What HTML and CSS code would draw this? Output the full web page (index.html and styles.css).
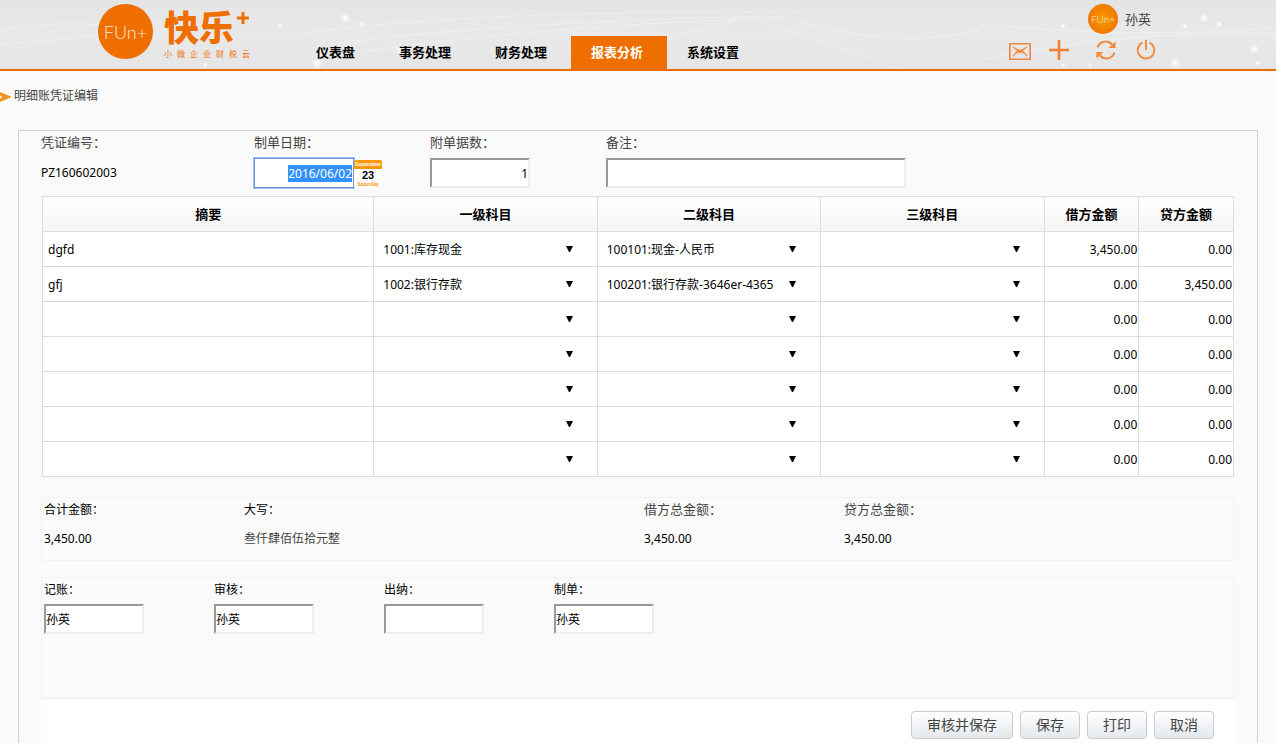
FILE: index.html
```html
<!DOCTYPE html>
<html lang="zh-CN">
<head>
<meta charset="utf-8">
<title>明细账凭证编辑</title>
<link rel="stylesheet" href="styles.css">
</head>
<body>
<header class="top">
  <svg class="sky" aria-hidden="true" width="100%" height="69" viewBox="0 0 1276 69" preserveAspectRatio="xMidYMid slice">
    <defs><radialGradient id="star"><stop offset="0" stop-color="#fff"/><stop offset="1" stop-color="#fff" stop-opacity="0"/></radialGradient></defs>
    <g fill="none" stroke="#fff" stroke-opacity=".3">
      <path d="M0 30Q60 20 110 26M0 44Q90 40 160 22M300 34Q460 10 800 12M330 44Q520 20 790 16M360 52Q560 24 780 18M670 69L740 14L900 69M560 69L735 20M980 60Q1120 30 1276 34M980 24Q1130 40 1276 28M800 22Q900 50 980 30"/>
    </g>
    <g fill="url(#star)">
      <circle cx="345" cy="18" r="5"/><circle cx="361" cy="24" r="3"/><circle cx="280" cy="26" r="3"/><circle cx="317" cy="63" r="6"/><circle cx="399" cy="50" r="4"/><circle cx="205" cy="65" r="3"/><circle cx="1204" cy="18" r="5"/><circle cx="1219" cy="24" r="3"/><circle cx="1175" cy="63" r="6"/><circle cx="1254" cy="49" r="5"/><circle cx="1185" cy="26" r="3"/><circle cx="1063" cy="26" r="3"/><circle cx="1258" cy="63" r="3"/><circle cx="1063" cy="65" r="3"/><circle cx="1090" cy="65" r="3"/>
    </g>
  </svg>
  <a class="brand" href="#" aria-label="快乐+">
    <span class="disc">FUn+</span>
    <span class="words">
      <span class="name">快乐<svg class="cross" viewBox="0 0 12 12" aria-hidden="true"><path d="M6 0V12M0 6H12" stroke="#ee6f00" stroke-width="3"/></svg></span>
      <span class="motto"><span>小</span><span>微</span><span>企</span><span>业</span><span>财</span><span>税</span><span>云</span></span>
    </span>
  </a>
  <nav class="menu">
    <a href="#">仪表盘</a><a href="#">事务处理</a><a href="#">财务处理</a><a class="on" href="#">报表分析</a><a href="#">系统设置</a>
  </nav>
  <div class="account">
    <div class="user"><span class="disc small">FUn+</span><span>孙英</span></div>
    <div class="tools">
      <button type="button" aria-label="消息"><svg width="22" height="17" viewBox="0 0 22 17"><path d="M.8.8H21.2V16.2H.8Z" fill="none" stroke="#f08a3c" stroke-width="1.6"/><path d="M4 4L11 8.500L18 4M4 13L8.500 8M18 13L13.500 8" fill="none" stroke="#f08a3c" stroke-width="1.2"/><path d="M6 5L11 7L16 5L13 9L15 11L11 9.500L7 11L9 9Z" fill="#f08a3c"/></svg></button>
      <button type="button" aria-label="新增"><svg width="20" height="20" viewBox="0 0 20 20"><path d="M10 0V20M0 10H20" stroke="#f08030" stroke-width="2.600"/></svg></button>
      <button type="button" aria-label="刷新" class="refresh"><svg width="20" height="20" viewBox="0 0 20 20"><path d="M1.500 7.500A8.500 8.500 0 0 1 16 4.500M18.500 12.500A8.500 8.500 0 0 1 4 15.500" fill="none" stroke="#f08a3c" stroke-width="2"/><path d="M19.500 1.500V8H12.500ZM.5 18.500V12H7.500Z" fill="#f08a3c"/></svg></button>
      <button type="button" aria-label="退出"><svg width="20" height="20" viewBox="0 0 20 20"><path d="M6.500 2.700A8.300 8.300 0 1 0 13.500 2.700M10 0V10" fill="none" stroke="#f08a3c" stroke-width="1.900"/></svg></button>
    </div>
  </div>
</header>

<h1 class="crumb"><svg width="12" height="12" viewBox="0 0 12 12" aria-hidden="true"><path d="M0 2L12 7L0 12V9L2 7L0 5Z" fill="#f2941c"/></svg>明细账凭证编辑</h1>

<main class="panel">
  <form class="voucher">
    <div class="head">
      <div class="field"><span class="cap">凭证编号：</span><span class="value">PZ160602003</span></div>
      <div class="field"><label class="cap" for="date">制单日期：</label>
        <div class="dated"><input class="box num focused" id="date" value="2016/06/02"><button class="cal" type="button" aria-label="选择日期"><span class="month">September</span><span class="day">23</span><span class="week">Saturday</span></button></div></div>
      <div class="field"><label class="cap" for="docs">附单据数：</label><input class="box num" id="docs" value="1"></div>
      <div class="field"><label class="cap" for="memo">备注：</label><input class="box wide" id="memo"></div>
    </div>

    <table class="entries">
      <colgroup><col class="c-sum"><col class="c-sub"><col class="c-sub"><col class="c-sub"><col class="c-amt"><col class="c-amt"></colgroup>
      <thead><tr><th>摘要</th><th>一级科目</th><th>二级科目</th><th>三级科目</th><th>借方金额</th><th>贷方金额</th></tr></thead>
      <tbody>
        <tr><td>dgfd</td><td class="pick"><select aria-label="一级科目"><option>1001:库存现金</option></select></td><td class="pick"><select aria-label="二级科目"><option>100101:现金-人民币</option></select></td><td class="pick"><select aria-label="三级科目"><option></option></select></td><td class="amt">3,450.00</td><td class="amt">0.00</td></tr>
        <tr><td>gfj</td><td class="pick"><select aria-label="一级科目"><option>1002:银行存款</option></select></td><td class="pick"><select aria-label="二级科目"><option>100201:银行存款-3646er-4365</option></select></td><td class="pick"><select aria-label="三级科目"><option></option></select></td><td class="amt">0.00</td><td class="amt">3,450.00</td></tr>
        <tr><td></td><td class="pick"><select aria-label="一级科目"><option></option></select></td><td class="pick"><select aria-label="二级科目"><option></option></select></td><td class="pick"><select aria-label="三级科目"><option></option></select></td><td class="amt">0.00</td><td class="amt">0.00</td></tr>
        <tr><td></td><td class="pick"><select aria-label="一级科目"><option></option></select></td><td class="pick"><select aria-label="二级科目"><option></option></select></td><td class="pick"><select aria-label="三级科目"><option></option></select></td><td class="amt">0.00</td><td class="amt">0.00</td></tr>
        <tr><td></td><td class="pick"><select aria-label="一级科目"><option></option></select></td><td class="pick"><select aria-label="二级科目"><option></option></select></td><td class="pick"><select aria-label="三级科目"><option></option></select></td><td class="amt">0.00</td><td class="amt">0.00</td></tr>
        <tr><td></td><td class="pick"><select aria-label="一级科目"><option></option></select></td><td class="pick"><select aria-label="二级科目"><option></option></select></td><td class="pick"><select aria-label="三级科目"><option></option></select></td><td class="amt">0.00</td><td class="amt">0.00</td></tr>
        <tr><td></td><td class="pick"><select aria-label="一级科目"><option></option></select></td><td class="pick"><select aria-label="二级科目"><option></option></select></td><td class="pick"><select aria-label="三级科目"><option></option></select></td><td class="amt">0.00</td><td class="amt">0.00</td></tr>
      </tbody>
    </table>

    <section class="group totals">
      <div class="field"><span class="cap dark">合计金额：</span><span class="value">3,450.00</span></div>
      <div class="field"><span class="cap dark">大写：</span><span class="value soft">叁仟肆佰伍拾元整</span></div>
      <div class="field"><span class="cap">借方总金额：</span><span class="value">3,450.00</span></div>
      <div class="field"><span class="cap">贷方总金额：</span><span class="value">3,450.00</span></div>
    </section>

    <section class="group signers">
      <div class="field"><label class="cap dark" for="book">记账：</label><input class="box" id="book" value="孙英"></div>
      <div class="field"><label class="cap dark" for="audit">审核：</label><input class="box" id="audit" value="孙英"></div>
      <div class="field"><label class="cap dark" for="cash">出纳：</label><input class="box" id="cash"></div>
      <div class="field"><label class="cap dark" for="maker">制单：</label><input class="box" id="maker" value="孙英"></div>
    </section>

    <div class="actions">
      <button type="button">审核并保存</button><button type="button">保存</button><button type="button">打印</button><button type="button">取消</button>
    </div>
  </form>
</main>
<script src="app.js"></script>
</body>
</html>
```
FILE: styles.css
```css
* { box-sizing: border-box; }
body {
  margin: 0;
  min-height: 100vh;
  display: flex;
  flex-direction: column;
  background: #fafafa;
  color: #000;
  font: 12px/18px "Noto Sans", "Noto Sans CJK SC", sans-serif;
}
button, input, select { font: inherit; color: inherit; }
a { color: inherit; text-decoration: none; }

.top {
  position: relative;
  display: flex;
  min-height: 71px;
  padding: 0 120px 0 98px;
  background: linear-gradient(#e4e4e4, #e9e9e9 50%, #e5e5e5);
  border-bottom: 2px solid #e86c00;
}
.sky { position: absolute; inset: 0; }
.brand, .menu, .account { position: relative; }
.brand { display: flex; gap: 11px; width: 198px; padding-top: 4px; color: #ee6f00; }
.disc {
  display: flex;
  align-items: center;
  justify-content: center;
  width: 55px;
  height: 55px;
  border-radius: 50%;
  background: #ee6f00;
  color: #ffe9d2;
  font: 300 18px/18px Lato, sans-serif;
}
.disc.small {
  width: 30px;
  height: 30px;
  background: radial-gradient(#f99a00, #ec6a00);
  font-size: 10px;
}
.words { width: 86px; padding-top: 4px; }
.name { display: flex; font: 900 35px/41px "Liberation Sans", "Noto Sans CJK SC", sans-serif; }
.cross { width: 12px; height: 12px; margin: 4px 0 0 3px; }
.motto {
  display: flex;
  justify-content: space-between;
  font: 8px/12px "Liberation Sans", "Noto Sans CJK SC", sans-serif;
}

.menu { display: flex; align-items: flex-end; font-size: 13px; font-weight: bold; }
.menu a { padding: 0 24px 0 20px; line-height: 33px; white-space: nowrap; }
.menu .on { background: #ee6f00; color: #fff; }

.account { margin-left: auto; padding-top: 4px; }
.user { display: flex; align-items: center; gap: 7px; margin-left: 79px; font-size: 13px; color: #444; }
.tools { display: flex; align-items: center; gap: 18px; padding-top: 6px; }
.tools button { padding: 0; border: 0; background: none; line-height: 0; }
.tools button:first-child { padding-top: 2px; }
.tools .refresh { margin-left: 9px; }
.tools button:last-child { margin-left: 2px; }

.crumb {
  display: flex;
  align-items: center;
  gap: 2px;
  margin: 16px 0 25px;
  font-size: 12px;
  font-weight: normal;
  color: #444;
}

.panel {
  flex: 1;
  display: flex;
  margin: 0 18px;
  padding: 0 22px;
  border: 1px solid #d0d0d0;
  border-bottom: 0;
}
.voucher { flex: 1; display: flex; flex-direction: column; }
.head { display: grid; grid-template-columns: 213px 176px 176px 1fr; padding-bottom: 8px; }
.field { display: flex; flex-direction: column; align-items: flex-start; }
.cap { font-size: 13px; line-height: 23px; color: #444; }
.head .cap { padding-bottom: 4px; }
.cap.dark { font-size: 12px; color: #000; }
.value { line-height: 30px; }
.soft { color: #444; }
.dated { display: flex; }
.box {
  width: 100px;
  height: 30px;
  padding: 0;
  border: 2px solid;
  border-color: #999 #eee #eee #999;
  background: #fff;
  outline: 0;
}
.box.wide { width: 300px; }
.box.num { text-align: right; }
.box.focused { border: 1px solid #6e96d8; padding-right: 1px; box-shadow: 0 0 0 1px #9dbcf5; }
.box::selection { background: #3390ff; color: #fff; }
.cal {
  display: flex;
  flex-direction: column;
  justify-content: space-between;
  width: 28px;
  height: 28px;
  margin-top: 2px;
  padding: 0;
  border: 0;
  border-radius: 2px;
  background: #fff;
  text-align: center;
  overflow: hidden;
}
.month { background: #f9980a; color: #fff; font: bold 5px/9px "Liberation Sans", sans-serif; }
.day { font: bold 11px/12px "Liberation Sans", sans-serif; }
.week { color: #f9980a; font: bold 5px/7px "Liberation Sans", sans-serif; }

.entries {
  width: calc(100% - 2px);
  margin: 0 1px;
  border-collapse: collapse;
  table-layout: fixed;
  background: #fff;
}
.c-sum { width: 27.8%; }
.c-sub { width: 18.75%; }
.c-amt { width: 7.95%; }
.entries th, .entries td { height: 35px; padding: 0; border: 1px solid #ddd; }
.entries th { font-size: 13px; background: linear-gradient(#fff, #f4f4f4); }
.entries td { padding: 2px 0 0 5px; }
.entries .amt { padding: 2px 1px 0 0; text-align: right; }
.entries .pick { padding: 2px 24px 0 9px; }
.pick select {
  display: block;
  width: 100%;
  height: 30px;
  padding: 0;
  border: 0;
  outline: 0;
  appearance: none;
  background: url("data:image/svg+xml,%3Csvg xmlns='http://www.w3.org/2000/svg' width='7' height='6'%3E%3Cpath d='M0 0H7L4 6H3Z'/%3E%3C/svg%3E") no-repeat right 11px;
}

.group { display: grid; border: 1px solid #f3f3f3; padding-left: 2px; }
.totals { grid-template-columns: 200px 400px 200px 1fr; margin-top: 20px; padding-bottom: 4px; }
.totals .value { line-height: 35px; }
.signers { grid-template-columns: 170px 170px 170px 1fr; margin-top: 16px; padding-bottom: 63px; border-bottom-width: 2px; }
.signers .cap { padding-bottom: 3px; }

.actions {
  flex: 1;
  display: flex;
  justify-content: flex-end;
  align-items: flex-start;
  gap: 7px;
  margin-top: 2px;
  padding: 10px 21px 4px;
  background: #fff;
}
.actions button {
  height: 28px;
  padding: 0 15px;
  border: 1px solid #c8ccd0;
  border-radius: 4px;
  background: linear-gradient(#fff, #e4e8ec);
  color: #444;
  font-size: 14px;
}
```
FILE: app.js
```js
const dateBox = document.getElementById("date");
dateBox.focus();
dateBox.select();
```
